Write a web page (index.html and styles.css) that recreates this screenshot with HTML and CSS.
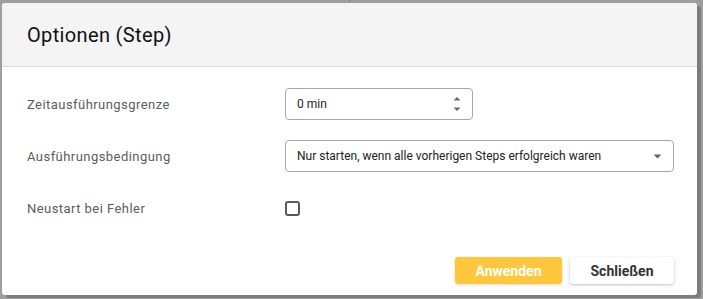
FILE: index.html
```html
<!DOCTYPE html>
<html>
<head>
  <title>Optionen (Step)</title>
  <link rel="stylesheet" href="styles.css">
</head>
<body>
  <div class="backdrop-line"></div>
  <div class="dialog">
    <div class="dialog-header">
      <h2>Optionen (Step)</h2>
    </div>

    <div class="dialog-body">
      <label class="field-label">Zeitausführungsgrenze</label>
      <div class="number-input">
        <span>0 min</span>
        <span class="spinner">
          <svg width="8" height="5" viewBox="0 0 8 5"><path d="M0.5 4.5 L4 1 L7.5 4.5 Z" fill="#666"/></svg>
          <svg width="8" height="5" viewBox="0 0 8 5"><path d="M0.5 0.5 L4 4 L7.5 0.5 Z" fill="#666"/></svg>
        </span>
      </div>

      <label class="field-label">Ausführungsbedingung</label>
      <div class="select-input">
        <span>Nur starten, wenn alle vorherigen Steps erfolgreich waren</span>
        <svg width="9" height="5" viewBox="0 0 9 5"><path d="M0.5 0.5 L4.5 4.5 L8.5 0.5 Z" fill="#666"/></svg>
      </div>

      <label class="field-label">Neustart bei Fehler</label>
      <div class="check-cell"><span class="checkbox"></span></div>
    </div>

    <div class="dialog-footer">
      <button class="btn btn-primary">Anwenden</button>
      <button class="btn btn-default">Schließen</button>
    </div>
  </div>
</body>
</html>
```

FILE: styles.css
```css
html, body { height: 100%; }
body {
  margin: 0;
  padding: 3px 6px 4px 2px;
  box-sizing: border-box;
  background-color: #9e9e9e;
  font-family: Roboto, 'Liberation Sans', sans-serif;
  position: relative;
}
.backdrop-line {
  position: absolute; left: 349px; top: 0;
  width: 1px; height: 3px; background: #8a8a8a;
}
.dialog {
  width: 695px; height: 292px;
  background-color: #fff;
  border-radius: 3px;
  box-shadow: 4px 3px 0 #7c7c7c;
  display: flex; flex-direction: column;
  overflow: hidden;
}
.dialog-header {
  height: 63px;
  background-color: #f4f4f4;
  border-bottom: 1px solid #dadada;
  padding: 0 25px;
  display: flex; align-items: center;
}
.dialog-header h2 {
  margin: 0;
  font-size: 20px; font-weight: 400;
  letter-spacing: 0.35px;
  color: #111;
}
.dialog-body {
  padding: 21px 23px 0 25px;
  display: grid;
  grid-template-columns: 258px 1fr;
  row-gap: 20px;
  align-items: center;
}
.field-label { font-size: 13px; color: #5c5c5c; letter-spacing: 0.45px; }
.number-input, .select-input {
  height: 32px; box-sizing: border-box;
  border: 1px solid #a8a8a8; border-radius: 4px;
  padding: 0 11px;
  display: flex; align-items: center; justify-content: space-between;
  font-size: 12px; color: #222;
}
.number-input { width: 188px; padding-right: 11px; }
.spinner { display: flex; flex-direction: column; gap: 6px; }
.spinner svg { display: block; }
.select-input { width: 389px; }
.check-cell { height: 32px; display: flex; align-items: center; }
.checkbox {
  width: 15px; height: 15px; box-sizing: border-box;
  border: 2px solid #5a5a5a; border-radius: 3px;
}
.dialog-footer {
  margin-top: auto;
  padding: 0 23px 11px 0;
  display: flex; justify-content: flex-end; gap: 8px;
}
.btn {
  height: 27px; border: none; border-radius: 3px;
  font-family: Roboto, 'Liberation Sans', sans-serif;
  font-size: 14px; font-weight: bold;
  cursor: pointer;
}
.btn-primary { width: 107px; background-color: #ffc73c; color: #fff; box-shadow: 0 1px 3px rgba(0,0,0,0.15); }
.btn-default { width: 104px; background-color: #fff; color: #333; box-shadow: 0 1px 3px rgba(0,0,0,0.25); }
```
